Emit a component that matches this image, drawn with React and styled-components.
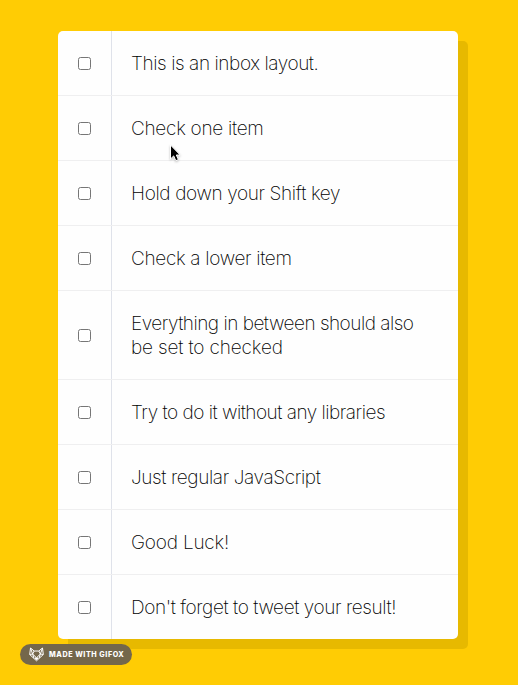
import React from 'react';
import styled, { createGlobalStyle } from 'styled-components';

const GlobalStyle = createGlobalStyle`
  * { box-sizing: border-box; }
  body {
    margin: 0;
    background: #ffcc04;
    font-family: Inter, "Liberation Sans", sans-serif;
  }
`;

const Page = styled.main`
  position: relative;
  width: 518px;
  height: 685px;
  padding: 31px 60px 0 58px;
  overflow: hidden;
`;

const Inbox = styled.div`
  width: 400px;
  background: #fefefe;
  border-radius: 5px;
  box-shadow: 10px 10px 0 #e7b900;
`;

const Item = styled.label`
  display: flex;
  align-items: stretch;
  border-bottom: 1px solid #efeff0;
  &:last-child { border-bottom: 0; }
`;

const CheckCell = styled.span`
  display: flex;
  flex: 0 0 54px;
  align-items: center;
  justify-content: center;
  border-right: 1px solid #dfe2ea;
`;

const Checkbox = styled.input.attrs({ type: 'checkbox' })`
  appearance: none;
  width: 13px;
  height: 13px;
  margin: 0;
  background: #fff;
  border: 1px solid #767676;
  border-radius: 2.5px;
  &:checked { background: #1675ff; }
`;

const Text = styled.p`
  flex: 1;
  margin: 0;
  padding: 21px 20px 19px 19px;
  font-size: 19px;
  font-weight: 200;
  line-height: 24px;
  color: #000;
  white-space: nowrap;
`;

const Line = styled.span`
  display: block;
  letter-spacing: ${(p) => p.$tracking}px;
`;

const Pointer = styled.svg`
  position: absolute;
  left: 168px;
  top: 143px;
  filter: drop-shadow(0 1px 1px rgba(0, 0, 0, 0.25));
`;

const Badge = styled.div`
  position: absolute;
  left: 20px;
  top: 644px;
  display: flex;
  align-items: center;
  width: 112px;
  height: 21px;
  padding-left: 9px;
  border-radius: 11px;
  background: #74674b;
  color: #fff;
`;

const BadgeText = styled.span`
  margin-left: 5px;
  font-family: Inter, sans-serif;
  font-size: 7.2px;
  font-weight: 800;
  letter-spacing: 0.54px;
  line-height: 21px;
  white-space: nowrap;
`;

const items = [
  [['This is an inbox layout.', -0.42]],
  [['Check one item', -0.28]],
  [['Hold down your Shift key', -0.37]],
  [['Check a lower item', -0.32]],
  [['Everything in between should also', -0.5], ['be set to checked', -0.14]],
  [['Try to do it without any libraries', -0.49]],
  [['Just regular JavaScript', -0.38]],
  [['Good Luck!', -0.2]],
  [["Don't forget to tweet your result!", -0.41]],
];

function FoxIcon() {
  return (
    <svg width="15" height="15" viewBox="0 0 15 15" fill="none" stroke="#fff" strokeWidth="1" strokeLinejoin="round">
      <path d="M1.5 1 L5.2 4 H9.8 L13.5 1 L14.3 7.5 L7.5 13.8 L.7 7.5 Z" />
      <path d="M1.5 1 L3.6 7 L.7 7.5 M13.5 1 L11.4 7 L14.3 7.5 M3.6 7 L7.5 10.8 L11.4 7 M5.2 4 L3.6 7 M9.8 4 L11.4 7 M3.6 7 L5 11.2 M11.4 7 L10 11.2" />
      <path d="M6 11 H9 L7.5 12.8 Z" fill="#fff" />
    </svg>
  );
}

export default function App() {
  return (
    <>
      <GlobalStyle />
      <Page>
        <Inbox>
          {items.map((lines) => (
            <Item key={lines[0][0]}>
              <CheckCell><Checkbox /></CheckCell>
              <Text>
                {lines.map(([text, tracking]) => <Line key={text} $tracking={tracking}>{text}</Line>)}
              </Text>
            </Item>
          ))}
        </Inbox>
        <Pointer width="14" height="20" viewBox="0 0 14 20">
          <path d="M2.5 2 V16 L5.7 12.9 L7.8 17.7 L10.4 16.6 L8.3 12 H12.2 Z" fill="#000" stroke="#fff" strokeWidth="1" />
        </Pointer>
        <Badge>
          <FoxIcon />
          <BadgeText>MADE WITH GIFOX</BadgeText>
        </Badge>
      </Page>
    </>
  );
}
